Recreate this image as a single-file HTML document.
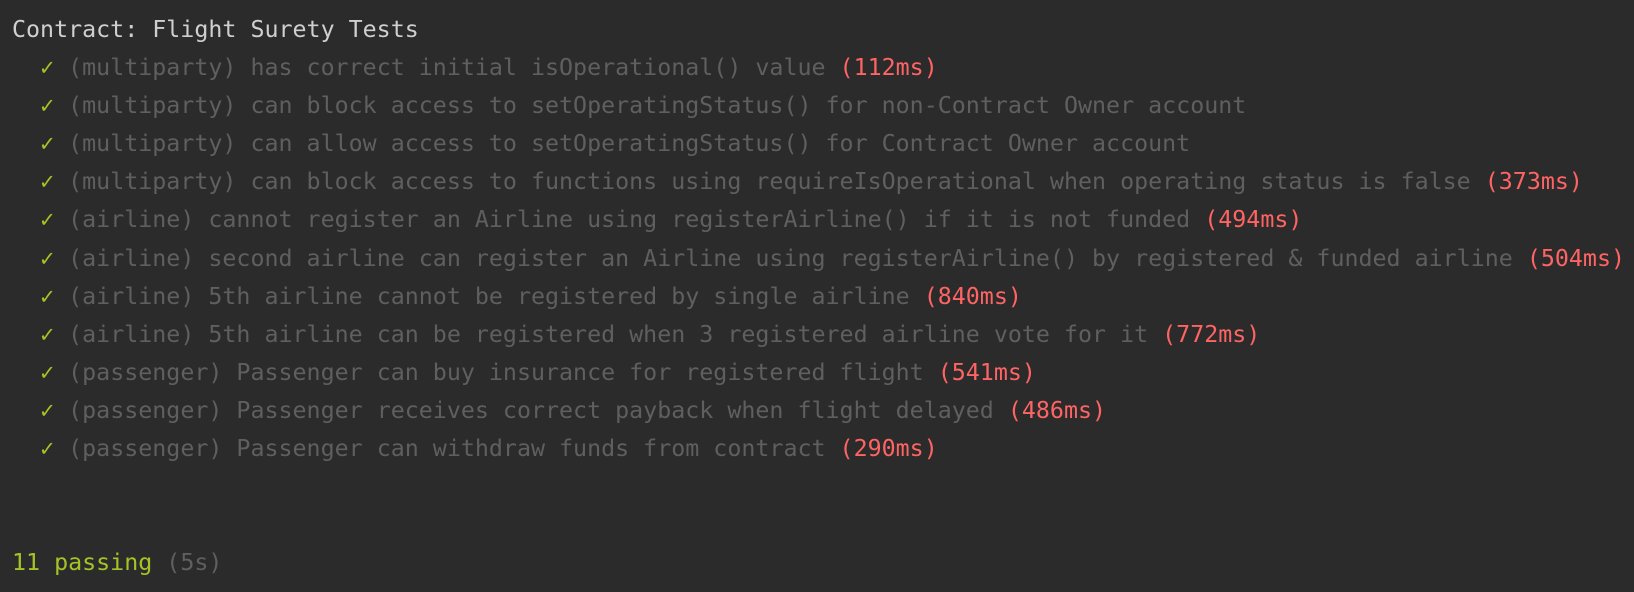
<!DOCTYPE html>
<html><head><style>
html,body{margin:0;padding:0;}
body{width:1634px;height:592px;background:#2b2b2b;overflow:hidden;font-family:"DejaVu Sans Mono","Liberation Mono",monospace;font-size:23.3px;}
.c{position:absolute;left:12px;top:11px;white-space:pre;line-height:38.1px;color:#5f5f5f;}
.t{color:#cfcfcf}
.k{color:#a4c426;font-weight:bold}
.r{color:#fe6464}
.g{color:#a4c426}
</style></head><body>
<div class="c"><span class="t">Contract: Flight Surety Tests</span>
  <span class="k">✓</span> (multiparty) has correct initial isOperational() value <span class="r">(112ms)</span>
  <span class="k">✓</span> (multiparty) can block access to setOperatingStatus() for non-Contract Owner account
  <span class="k">✓</span> (multiparty) can allow access to setOperatingStatus() for Contract Owner account
  <span class="k">✓</span> (multiparty) can block access to functions using requireIsOperational when operating status is false <span class="r">(373ms)</span>
  <span class="k">✓</span> (airline) cannot register an Airline using registerAirline() if it is not funded <span class="r">(494ms)</span>
  <span class="k">✓</span> (airline) second airline can register an Airline using registerAirline() by registered &amp; funded airline <span class="r">(504ms)</span>
  <span class="k">✓</span> (airline) 5th airline cannot be registered by single airline <span class="r">(840ms)</span>
  <span class="k">✓</span> (airline) 5th airline can be registered when 3 registered airline vote for it <span class="r">(772ms)</span>
  <span class="k">✓</span> (passenger) Passenger can buy insurance for registered flight <span class="r">(541ms)</span>
  <span class="k">✓</span> (passenger) Passenger receives correct payback when flight delayed <span class="r">(486ms)</span>
  <span class="k">✓</span> (passenger) Passenger can withdraw funds from contract <span class="r">(290ms)</span>


<span class="g">11 passing</span> (5s)</div>
</body></html>
